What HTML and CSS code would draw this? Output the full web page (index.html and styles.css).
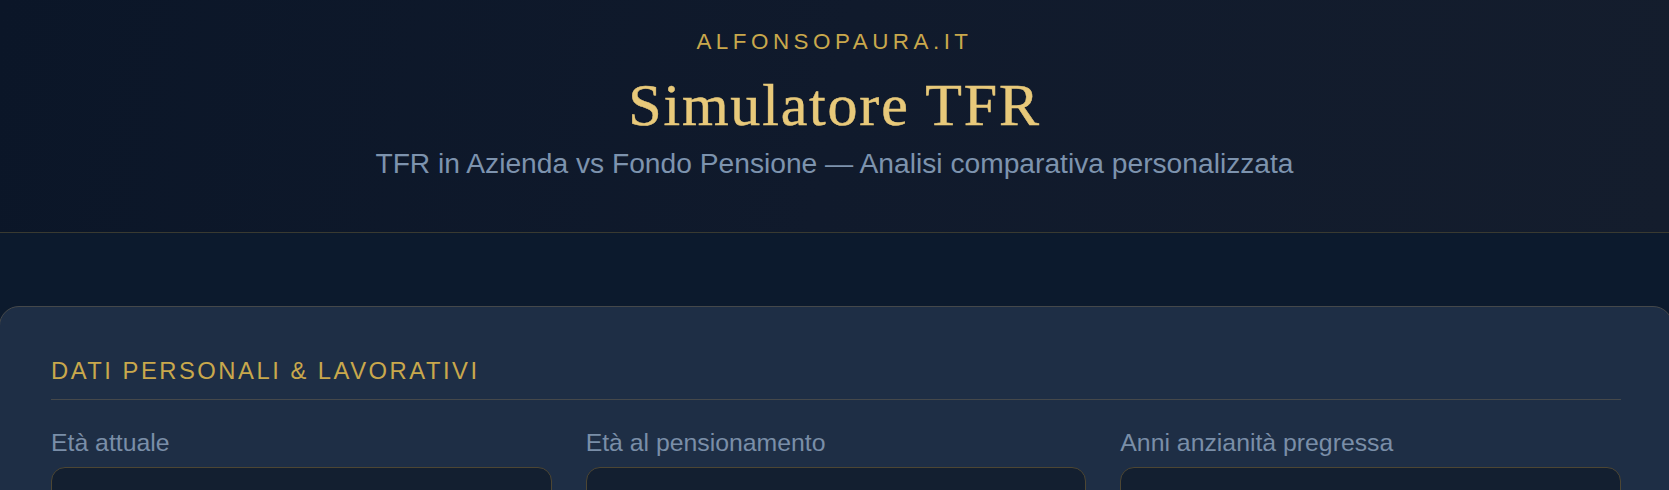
FILE: index.html
```html
<!DOCTYPE html>
<html lang="it">
<head>
    <meta charset="UTF-8">
    <meta name="viewport" content="width=device-width, initial-scale=1.0">
    <title>Simulatore TFR</title>
    <link rel="stylesheet" href="styles.css">
</head>
<body>
    <header class="top">
        <p class="brand">alfonsopaura.it</p>
        <h1 class="title">Simulatore TFR</h1>
        <p class="subtitle">TFR in Azienda vs Fondo Pensione — Analisi comparativa personalizzata</p>
    </header>

    <main class="page">
        <section class="card">
            <h2 class="card-title">Dati personali &amp; lavorativi</h2>
            <div class="fields">
                <div class="field">
                    <label for="eta">Età attuale</label>
                    <input id="eta" type="number" value="35">
                </div>
                <div class="field">
                    <label for="pensione">Età al pensionamento</label>
                    <input id="pensione" type="number" value="67">
                </div>
                <div class="field">
                    <label for="anni">Anni anzianità pregressa</label>
                    <input id="anni" type="number" value="5">
                </div>
            </div>
        </section>
    </main>
</body>
</html>
```

FILE: styles.css
```css
*{
    margin: 0;
    padding: 0;
    box-sizing: border-box;
}
html, body{
    overflow-x: hidden;
}
body{
    background: #0c1a2d;
    font-family: "Liberation Sans", Arial, sans-serif;
    color: #7a8ea8;
}

/* testata */
.top{
    padding: 28px 0 52px;
    text-align: center;
    background: linear-gradient(100deg, #0b1628 0%, #101a2c 50%, #141d2d 100%);
    border-bottom: 1px solid #393a31;
}
.brand{
    font-size: 22.4px;
    line-height: 27px;
    letter-spacing: 4.5px;
    text-transform: uppercase;
    color: #c9a84c;
}
.title{
    margin-top: 18px;
    font-family: "Liberation Serif", Georgia, serif;
    font-weight: normal;
    font-size: 60px;
    line-height: 64px;
    letter-spacing: 1.8px;
    color: #e8c97a;
    -webkit-text-stroke: 0.5px #e8c97a;
}
.subtitle{
    margin-top: 9px;
    font-size: 28.2px;
    line-height: 34px;
    color: #7d93ae;
}

/* contenuto */
.page{
    padding-top: 73px;
}
.card{
    margin: 0 -4px 0 -1px;
    padding: 50px 51px 51px;
    background: #1e2e45;
    border: 1px solid #45484a;
    border-radius: 20px;
}
.card-title{
    padding-bottom: 14px;
    border-bottom: 1px solid #45484a;
    font-size: 23.8px;
    line-height: 28px;
    font-weight: normal;
    letter-spacing: 2.5px;
    text-transform: uppercase;
    color: #c9a84c;
}
.fields{
    display: grid;
    grid-template-columns: repeat(3, 1fr);
    gap: 34px;
    padding-top: 28px;
}
.field label{
    display: block;
    font-size: 24.8px;
    line-height: 29px;
    margin-bottom: 10px;
    color: #7a8ea8;
}
.field input{
    display: block;
    width: 100%;
    height: 72px;
    padding: 0 21px;
    background: #131f30;
    border: 1px solid #4d4633;
    border-radius: 14px;
    font-family: "Liberation Sans", Arial, sans-serif;
    font-size: 28px;
    color: #e6e9ee;
    outline: none;
}
```
